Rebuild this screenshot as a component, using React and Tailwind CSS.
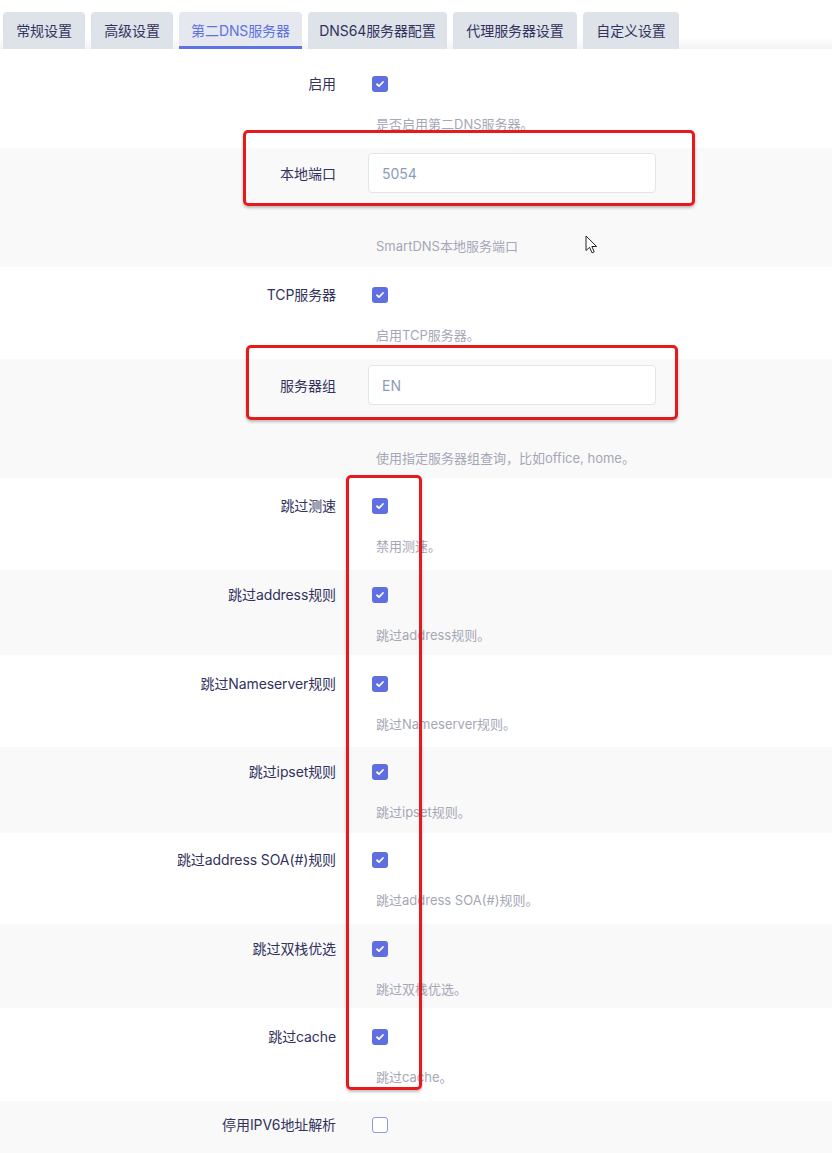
import React from 'react'

const tabs = [
  {t: '常规设置', w: 'w-[82px]'},
  {t: '高级设置', w: 'w-[82px]'},
  {t: '第二DNS服务器', w: 'w-[123px]'},
  {t: 'DNS64服务器配置', w: 'w-[139px]'},
  {t: '代理服务器设置', w: 'w-[124px]'},
  {t: '自定义设置', w: 'w-[96px]'},
]

const Check = ({checked = true}) => checked ? (
  <span className="flex h-4 w-4 items-center justify-center rounded-[3px] bg-[#5f6ee0]">
    <svg viewBox="0 0 12 12" className="h-[10px] w-[10px]">
      <path d="M2.4 6.3l2.4 2.3 4.8-5" fill="none" stroke="white" strokeWidth="2.1" strokeLinecap="round" strokeLinejoin="round" />
    </svg>
  </span>
) : (
  <span className="block h-4 w-4 rounded-[3px] border border-[#8e97ea] bg-white"></span>
)

const CheckRow = ({label, desc, cls, checked}) => (
  <div className={`flex ${cls}`}>
    <div className="w-[336px] text-right text-[14px] leading-5 tracking-[-0.1px] text-[#32325d]">{label}</div>
    <div className="pl-[36px]">
      <div className="flex h-5 items-center"><Check checked={checked} /></div>
      {desc && <div className="mt-5 pl-1 text-[13px] leading-5 text-[#a5a7b6]">{desc}</div>}
    </div>
  </div>
)

const InputRow = ({label, value, desc, cls}) => (
  <div className={`flex bg-[#f9f9f9] ${cls}`}>
    <div className="flex h-10 w-[336px] items-center justify-end text-[14px] text-[#32325d]">{label}</div>
    <div className="pl-[32px]">
      <div className="flex h-10 w-[288px] items-center rounded-[4px] border border-[#e3e5ea] bg-white px-[13px] text-[14px] text-[#8d9cb8]">{value}</div>
      <div className="mt-[43px] pl-2 text-[13px] leading-5 text-[#a5a7b6]">{desc}</div>
    </div>
  </div>
)

export default function App() {
  return (
    <div className="relative h-[1153px] w-[832px] overflow-hidden bg-white font-[Inter,'Noto_Sans_CJK_SC',sans-serif]">
      {/* tab bar */}
      <div className="flex h-[49px] items-end gap-[6px] bg-[linear-gradient(to_bottom,#ffffff_76%,#f2f3f6)] pl-[3px]">
        {tabs.map((tab, i) => (
          <div
            key={tab.t}
            className={i === 2
              ? `flex h-[37px] ${tab.w} items-center justify-center whitespace-nowrap rounded-t-[4px] border-b-[3px] border-[#5e72e4] bg-[#e5e8ee] pt-[3px] text-[14px] tracking-[-0.1px] text-[#5e72e4]`
              : `flex h-[37px] ${tab.w} items-center justify-center whitespace-nowrap rounded-t-[4px] bg-[#dee2e9] text-[14px] tracking-[-0.1px] text-[#32325d]`}
          >
            {tab.t}
          </div>
        ))}
      </div>

      <CheckRow cls="h-[99px] pt-[25px] bg-white" label="启用" desc="是否启用第二DNS服务器。" />
      <InputRow cls="h-[119px] pt-[5px]" label="本地端口" value="5054" desc="SmartDNS本地服务端口" />
      <CheckRow cls="h-[92px] pt-[18px] bg-white" label="TCP服务器" desc="启用TCP服务器。" />
      <InputRow cls="h-[119px] pt-[6px]" label="服务器组" value="EN" desc="使用指定服务器组查询，比如office, home。" />
      <CheckRow cls="h-[92px] pt-[18px] bg-white" label="跳过测速" desc="禁用测速。" />
      <CheckRow cls="h-[85px] pt-[15px] bg-[#f9f9f9]" label="跳过address规则" desc="跳过address规则。" />
      <CheckRow cls="h-[92px] pt-[19px] bg-white" label="跳过Nameserver规则" desc="跳过Nameserver规则。" />
      <CheckRow cls="h-[86px] pt-[15px] bg-[#f9f9f9]" label="跳过ipset规则" desc="跳过ipset规则。" />
      <CheckRow cls="h-[91px] pt-[17px] bg-white" label="跳过address SOA(#)规则" desc="跳过address SOA(#)规则。" />
      <CheckRow cls="h-[84px] pt-[15px] bg-[#f9f9f9]" label="跳过双栈优选" desc="跳过双栈优选。" />
      <CheckRow cls="h-[93px] pt-[19px] bg-white" label="跳过cache" desc="跳过cache。" />
      <CheckRow cls="h-[90px] pt-[14px] bg-[#f9f9f9]" label="停用IPV6地址解析" checked={false} />

      {/* red annotation boxes */}
      <div className="absolute left-[243px] top-[130px] h-[76px] w-[452px] rounded-[5px] border-[3px] border-[#e8191c] shadow-[0_2px_3px_rgba(0,0,0,0.25)]"></div>
      <div className="absolute left-[246px] top-[345px] h-[75px] w-[432px] rounded-[5px] border-[3px] border-[#e8191c] shadow-[0_2px_3px_rgba(0,0,0,0.25)]"></div>
      <div className="absolute left-[346px] top-[475px] h-[615px] w-[76px] rounded-[5px] border-[3px] border-[#e8191c] shadow-[0_2px_3px_rgba(0,0,0,0.25)]"></div>

      {/* mouse cursor */}
      <svg className="absolute left-[585px] top-[235px]" width="14" height="20" viewBox="0 0 14 20">
        <path d="M1 1 L1 15.5 L4.6 12.3 L7 17.8 L9.2 16.8 L6.9 11.5 L11.6 11.5 Z" fill="white" stroke="#222" strokeWidth="1" strokeLinejoin="round" />
      </svg>
    </div>
  )
}
